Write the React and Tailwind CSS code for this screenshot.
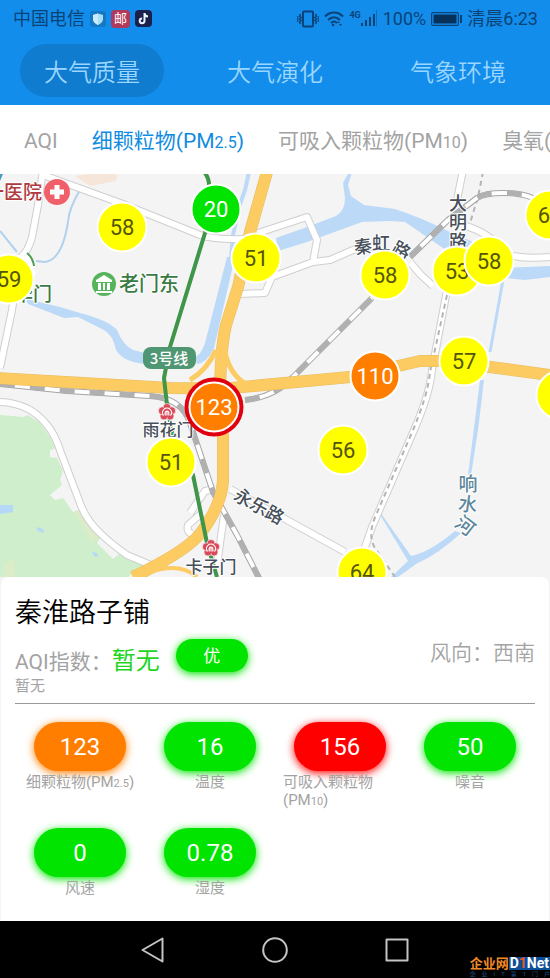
import React, { useState } from "react";

const tabs = ["大气质量", "大气演化", "气象环境"];

const filters = [
  { key: "aqi", name: "AQI" },
  { key: "pm25", name: "细颗粒物", pm: "2.5" },
  { key: "pm10", name: "可吸入颗粒物", pm: "10" },
  { key: "o3", name: "臭氧(O3)" },
];

const levelColor = {
  good: "bg-[#00e400] text-white",
  fair: "bg-[#ffff00] text-[#55550a]",
  light: "bg-[#ff7e00] text-white",
};

// x / y are map units, the map is 550 x 403
const stations = [
  { x: 122, y: 53, value: 58, level: "fair" },
  { x: 216, y: 35, value: 20, level: "good" },
  { x: 256, y: 84, value: 51, level: "fair" },
  { x: 9, y: 105, value: 59, level: "fair" },
  { x: 385, y: 101, value: 58, level: "fair" },
  { x: 457, y: 97, value: 53, level: "fair" },
  { x: 489, y: 87, value: 58, level: "fair" },
  { x: 550, y: 41, value: 62, level: "fair" },
  { x: 464, y: 187, value: 57, level: "fair" },
  { x: 375, y: 202, value: 110, level: "light" },
  { x: 214, y: 233, value: 123, level: "light", active: true },
  { x: 171, y: 288, value: 51, level: "fair" },
  { x: 343, y: 276, value: 56, level: "fair" },
  { x: 362, y: 398, value: 64, level: "fair" },
  { x: 561, y: 221, value: 55, level: "fair" },
];

const pillColor = {
  good: "bg-[#00e400] shadow-[0_2px_8px_#00e400]",
  light: "bg-[#ff7e00] shadow-[0_2px_8px_#ff7e00]",
  bad: "bg-[#ff0000] shadow-[0_2px_8px_#ff0000]",
};

const readings = [
  { value: "123", name: "细颗粒物", pm: "2.5", level: "light" },
  { value: "16", name: "温度", level: "good" },
  { value: "156", name: "可吸入颗粒物", pm: "10", level: "bad" },
  { value: "50", name: "噪音", level: "good" },
  { value: "0", name: "风速", level: "good" },
  { value: "0.78", name: "湿度", level: "good" },
];

const StatusBar = () => (
  <div className="flex items-center justify-between pl-[13px] pr-3 pt-px h-9 text-lg leading-6 text-[#0b4377]">
    <div className="flex items-center gap-[5px]">
      <span>中国电信</span>
      <svg width="16" height="16" viewBox="0 0 16 16">
        <rect width="16" height="16" rx="3" fill="#1478c2" />
        <path d="M8 2.5 13 4v4c0 3-2.500 4.700-5 6-2.500-1.300-5-3-5-6V4z" fill="#a9dcf7" />
        <path d="M8 2.500V14c-2.500-1.300-5-3-5-6V4z" fill="#c9ecfc" />
      </svg>
      <span className="flex items-center justify-center w-[19px] h-[18px] rounded-sm bg-[#b03a5b] text-white text-[13px] leading-4">
        邮
      </span>
      <svg width="17" height="17" viewBox="0 0 17 17">
        <rect width="17" height="17" rx="4" fill="#1b1f4b" />
        <path d="M9.500 3v7.800a2.400 2.400 0 1 1-2.400-2.400M9.500 3.500c.3 1.900 1.600 2.900 3.500 3" fill="none" stroke="#e8f4ff" strokeWidth="2" />
      </svg>
    </div>
    <div className="flex items-center gap-[5px]">
      <svg width="22" height="18" viewBox="0 0 22 18" fill="none" stroke="#0b4377" strokeWidth="1.600">
        <rect x="6" y="1.500" width="10" height="15" rx="1" strokeWidth="2" />
        <path d="M3.500 4 2.500 6 4 7.500 2.500 9 4 10.500 2.500 12l1 2M18.500 4l1 2L18 7.500 19.500 9 18 10.500l1.500 1.500-1 2" />
        <path d="M.7 6v6M21.300 6v6" strokeWidth="1" />
      </svg>
      <svg width="20" height="17" viewBox="0 0 20 17" fill="none" stroke="#0b4377" strokeWidth="2">
        <path d="M1 6.500C6 1 14 1 19 6.500M4 10c3.500-3.800 8.500-3.800 12 0M7 13c2-2 4-2 6 0" />
        <circle cx="9" cy="15" r="1.300" fill="#0b4377" stroke="none" />
        <path d="m13 13 1.500-2 1.500 2zM15 14l1.500 2 1.500-2z" fill="#0b4377" stroke="none" />
      </svg>
      <span className="flex">
        <span className="text-[9px] leading-[10px] font-bold">4G</span>
        <svg width="17" height="17" viewBox="0 0 17 17" fill="#0b4377">
          <rect x="0" y="13" width="2" height="3" />
          <rect x="4" y="10" width="2" height="6" />
          <rect x="8" y="7" width="2" height="9" />
          <rect x="12" y="4" width="2" height="12" />
          <rect x="15" y="0" width="1" height="16" opacity=".4" />
        </svg>
      </span>
      <span>100%</span>
      <svg width="31" height="14" viewBox="0 0 31 14">
        <rect x=".6" y=".6" width="26.800" height="12.800" rx="1.500" fill="none" stroke="#0b4377" strokeWidth="1.200" />
        <rect x="2.500" y="2.500" width="23" height="9" fill="#08315a" />
        <rect x="29" y="3" width="2" height="8" fill="#0b4377" />
      </svg>
      <span>清晨6:23</span>
    </div>
  </div>
);

const MetroIcon = ({ x, y }) => (
  <g transform={`translate(${x} ${y})`}>
    <g fill="#d94a5a" stroke="#fff" strokeWidth=".6">
      <circle cx="0" cy="-4.500" r="4" />
      <circle cx="4.600" cy="-1.200" r="4" />
      <circle cx="3" cy="4" r="4" />
      <circle cx="-3" cy="4" r="4" />
      <circle cx="-4.600" cy="-1.200" r="4" />
    </g>
    <circle r="5.500" fill="#d94a5a" />
    <path d="M-3.500 3.500A4.500 4.500 0 1 1 3.500 3.500M-1.800 3.500V.5a1.800 1.800 0 0 1 1.800-1.500 1.800 1.800 0 0 1 1.800 1.500v3M0-1v4.500" fill="none" stroke="#fff" strokeWidth="1.200" />
  </g>
);

const roads = [
  "M43 170 38 205 32 237Q28 252 20 258L12 310 0 368",
  "M43 175 123 204 200 235Q215 240 245 239",
  "M258 233 307 217 317 240 313 262",
  "M240 294 265 293 272 277 313 262 330 260 353 250 375 246",
  "M410 262 420 274 433 286",
  "M463 170 457 200 M462 225Q490 232 500 250",
  "M513 256Q530 259 550 257",
  "M448 285 432 370Q430 395 411 437L372 527 364 550",
  "M0 402Q30 403 47 425 55 434 61 453L80 503Q86 520 100 533 110 543 127 555L153 566",
  "M230 489 287 520 345 552",
  "M215 489 205 491 190 513 M202 513 188 525Q186 533 193 534",
  "M224 515 217 565",
];

const rails = [
  "M410 257 448 220 477 198Q485 193 503 193 520 193 533 198",
  "M245 400Q275 397 293 377L372 298",
  "M0 384 67 391 150 396Q182 398 190 423L213 492 237 535 260 580",
];

const MapCanvas = () => (
  <svg
    className="block w-full h-full"
    viewBox="0 174 550 403"
    preserveAspectRatio="xMidYMid slice"
    fill="none"
    strokeLinejoin="round"
  >
    <rect x="0" y="174" width="550" height="403" fill="#f4f4f4" />
    {/* park */}
    <path
      fill="#cfeecb"
      d="M0 415 23 417 28 415 40 423 50 437 56 448 50 450 50 457 57 458 63 471 60 480 62 485 50 495 55 500 63 498 73 512 78 511 100 538 97 543 113 559 122 552 145 564 128 577H0z"
    />
    <path d="M74 512 80 509 101 534 92 543z" fill="#dcebc8" />
    <path d="M0 505H13V512L0 514zM36 527l7 2 1 4-6-2zM92 552l5 1 1 4-4-1z" fill="#b5d8f8" />
    <path d="M4 565 14 558 15 577H4z" fill="#dcebc8" />
    <path d="M75 176 100 172 118 175 116 181 90 186z" fill="#f6e6da" />
    <path d="M0 174H3L0 181z" fill="#4a9cc5" />

    {/* water */}
    <g fill="#bcdaf8">
      <path d="M26 299 60 307 80 313Q108 320 117 330 123 345 133 350L145 353V364Q123 362 116 350 113 335 104 330L78 317 64 318 28 304z" />
      <path d="M227 257H235L214 348Q207 363 197 364L195 357Q201 355 205 343z" />
      <path d="M276 238 307 227 336 216Q345 211 345 198L343 183 349 172H352L348 185 351 196 364 205 395 209Q420 217 450 232L480 245V261L443 248 405 222 390 221 362 222 307 242 278 251z" />
      <path d="M500 268 550 266V277L525 280 505 278z" />
      <path d="M480 380H484L478 430 471 475H468L475 420z" />
      <path d="M380 512 411 556Q430 552 455 531L461 533Q440 553 416 564L398 577H391L408 561 379 513z" />
    </g>
    <g stroke="#bcdaf8">
      <path d="M249 172 245 190 240 204 233 235 231 258" strokeWidth="4" />
      <path d="M80 190Q69 208 68 222 62 260 45 262L36 261M0 231 17 252" strokeWidth="2" stroke="#b0d2ee" />
      <path d="M503 280 490 352" strokeWidth="3" />
    </g>

    {/* streets */}
    {roads.map((d) => (
      <path key={d} d={d} stroke="#cfcfcf" strokeWidth="8" />
    ))}
    {roads.map((d) => (
      <path key={d} d={d} stroke="#fff" strokeWidth="6" />
    ))}
    <path d="M22 256Q28 254 32 275" stroke="#fff" strokeWidth="8" />
    <path d="M27 253Q33 258 34 266" stroke="#4c9c55" strokeWidth="2" />
    <path
      d="M483 172 478 197 470 223M447 295 430 372Q428 396 410 437L376 515Q367 535 375 548L395 577"
      stroke="#b4b4b4"
      strokeWidth="2"
      strokeDasharray="5 4"
    />

    {/* railways */}
    {rails.map((d) => (
      <g key={d}>
        <path d={d} stroke="#a5a5a5" strokeWidth="6" />
        <path d={d} stroke="#fff" strokeWidth="4" />
        <path d={d} stroke="#b0b0b0" strokeWidth="5" strokeDasharray="15 15" />
      </g>
    ))}

    {/* expressways */}
    <g stroke="#e6bd64">
      <path d="M-5 378 100 384 170 388Q195 388 220 389L350 377 420 361H445L550 375" strokeWidth="12" />
      <path d="M267 172 250 232 238 287 226 325Q220 350 220 400L223 437V480Q222 505 200 534 185 552 133 577" strokeWidth="12" />
    </g>
    <g stroke="#fccb62">
      <path d="M216 350Q207 370 190 380M225 352Q230 375 246 384" strokeWidth="5" />
      <path d="M-5 378 100 384 170 388Q195 388 220 389L350 377 420 361H445L550 375" strokeWidth="11" />
      <path d="M267 172 250 232 238 287 226 325Q220 350 220 400L223 437V480Q222 505 200 534 185 552 133 577" strokeWidth="11" />
      <path d="M150 572Q180 562 197 577" strokeWidth="4" />
    </g>

    {/* metro line 3 */}
    <path
      d="M204 172Q210 178 209 190L205 233 170 347 164 378 167 405 172 432 193 475 207 543 217 577"
      stroke="#3f9548"
      strokeWidth="4"
    />
    <rect x="143" y="347" width="53" height="22" rx="8" fill="#4f9673" />
    <MetroIcon x={167} y={412} />
    <MetroIcon x={211} y={548} />

    {/* places */}
    <circle cx="57" cy="192" r="13" fill="#f0606b" />
    <path d="M57 185V199M50 192H64" stroke="#fff" strokeWidth="5" />
    <circle cx="104" cy="284" r="12" fill="#56b45c" />
    <path d="M104 275 112 280V282H96V280zM98 283H101V290H98zM103 283H105V290H103zM107 283H110V290H107zM96 291H112V293H96z" fill="#fff" />

    <g
      className="font-['Noto_Sans_CJK_SC',sans-serif] font-medium"
      stroke="#fff"
      strokeWidth="2"
      paintOrder="stroke"
      fontSize="18"
    >
      <g fill="#b03b3f" fontSize="19">
        <text x="42" y="199" textAnchor="end">第一医院</text>
      </g>
      <g fill="#3a7a45" fontSize="19">
        <text x="52" y="301" textAnchor="end">中华门</text>
        <text x="119" y="291" fontSize="20">老门东</text>
      </g>
      <text x="169" y="364" fill="#fff" stroke="none" fontSize="15" textAnchor="middle">3号线</text>
      <g fill="#474f5a" textAnchor="middle">
        <text x="168" y="436" fontSize="17">雨花门</text>
        <text x="211" y="573" fontSize="17">卡子门</text>
        <text transform="translate(364 253) rotate(-8)">秦</text>
        <text transform="translate(381 250)">虹</text>
        <text transform="translate(398 256) rotate(30)">路</text>
        <text x="458" y="210">大</text>
        <text x="458" y="229">明</text>
        <text x="458" y="248">路</text>
        <text transform="translate(256 512) rotate(29)">永乐路</text>
      </g>
      <g fill="#5d879c" textAnchor="middle" fontSize="19">
        <text x="468" y="491">响</text>
        <text transform="translate(467 511) rotate(8)">水</text>
        <text transform="translate(461 531) rotate(38)">河</text>
      </g>
    </g>
  </svg>
);

const Station = ({ station, onSelect }) => (
  <button
    type="button"
    onClick={onSelect}
    style={{ left: `${(station.x / 550) * 100}%`, top: `${(station.y / 403) * 100}%` }}
    className={`absolute -translate-x-1/2 -translate-y-1/2 flex items-center justify-center rounded-full border-2 border-white w-[51px] h-[51px] pt-px text-[22px] leading-6 ${
      levelColor[station.level]
    } ${station.active ? "ring-4 ring-[#e00010]" : ""}`}
  >
    {station.value}
  </button>
);

const App = () => {
  const [tab, setTab] = useState(0);
  const [filter, setFilter] = useState("pm25");
  const [selected, setSelected] = useState(10);

  return (
    <div className="flex flex-col min-h-screen overflow-hidden bg-[#f4f4f4] font-[Roboto,'Noto_Sans_CJK_SC',sans-serif]">
      <header className="bg-[#128deb]">
        <StatusBar />
        <nav className="flex justify-between px-5 pt-2 pb-2">
          {tabs.map((name, index) => (
            <button
              key={name}
              type="button"
              onClick={() => setTab(index)}
              className={`h-[53px] px-6 pt-1 rounded-full text-2xl font-[350] text-[#9ad6ff] ${
                tab === index ? "bg-[#107ccf]" : ""
              }`}
            >
              {name}
            </button>
          ))}
        </nav>
      </header>

      <div className="flex items-center gap-[34px] h-[69px] pl-6 pt-1 overflow-hidden bg-white text-[21px] whitespace-nowrap">
        {filters.map((item) => (
          <button
            key={item.key}
            type="button"
            onClick={() => setFilter(item.key)}
            className={`shrink-0 ${filter === item.key ? "text-[#128ce0]" : "text-[#a3a3a3]"}`}
          >
            {item.name}
            {item.pm && (
              <>
                (PM<span className="text-base">{item.pm}</span>)
              </>
            )}
          </button>
        ))}
      </div>

      <main className="flex flex-col flex-1">
        <div className="relative flex-1 min-h-[400px] overflow-hidden">
          <div className="absolute inset-0">
            <MapCanvas />
          </div>
          {stations.map((station, index) => (
            <Station
              key={index}
              station={{ ...station, active: selected === index }}
              onSelect={() => setSelected(index)}
            />
          ))}
        </div>

        <section className="mx-px px-[14px] pt-[18px] pb-6 rounded-t-lg bg-white text-[#a3a3a3]">
          <h2 className="text-[27px] leading-9 font-[350] text-black">秦淮路子铺</h2>
          <div className="flex items-start justify-between mt-2 text-[21px] leading-7">
            <div className="flex items-start">
              <p className="pt-2">
                AQI指数：<span className="text-2xl leading-7 text-[#1fd51f]">暂无</span>
              </p>
              <span className="flex items-center justify-center w-[72px] h-[33px] ml-4 rounded-full bg-[#00e400] text-white text-[17px] shadow-[0_2px_8px_#00e400]">
                优
              </span>
            </div>
            <p className="font-[350]">风向：西南</p>
          </div>
          <p className="pb-[7px] text-[15px] leading-5 border-b border-[#999999]">暂无</p>

          <div className="grid grid-cols-4 gap-y-[17px] pt-[18px]">
            {readings.map((item) => (
              <div key={item.name} className="flex flex-col items-center px-2">
                <div
                  className={`flex items-center justify-center w-[92px] h-[49px] rounded-full text-white text-2xl ${
                    pillColor[item.level]
                  }`}
                >
                  {item.value}
                </div>
                <p className="mt-[2px] text-[15px] leading-[18px]">
                  {item.name}
                  {item.pm && (
                    <>
                      <wbr />
                      (PM<span className="text-[11px]">{item.pm}</span>)
                    </>
                  )}
                </p>
              </div>
            ))}
          </div>
        </section>
      </main>

      <footer className="relative flex items-center justify-center h-[57px] bg-black">
        <button type="button" aria-label="返回" className="flex justify-center w-[122px]">
          <svg width="26" height="28" viewBox="0 0 26 28" fill="none" stroke="#c4c4c4" strokeWidth="2" strokeLinejoin="round">
            <path d="M22.500 2.500V25.500L2.500 14z" />
          </svg>
        </button>
        <button type="button" aria-label="主页" className="flex justify-center w-[122px]">
          <svg width="28" height="28" viewBox="0 0 28 28" fill="none" stroke="#c4c4c4" strokeWidth="2">
            <circle cx="14" cy="14" r="11.800" />
          </svg>
        </button>
        <button type="button" aria-label="最近任务" className="flex justify-center w-[122px]">
          <svg width="28" height="28" viewBox="0 0 28 28" fill="none" stroke="#c4c4c4" strokeWidth="2" strokeLinejoin="round">
            <rect x="3.500" y="3.500" width="21" height="21" />
          </svg>
        </button>
        <div className="absolute right-0 bottom-0">
          <p className="flex items-center text-[13px] leading-[13px] font-bold">
            <span className="text-[#f08a24]">企业网</span>
            <span className="px-px bg-[#0d4f96] text-white text-sm leading-[13px]">
              D<span className="text-[#f0562a]">1</span>Net
            </span>
          </p>
          <p className="flex justify-between text-[6px] leading-[8px] text-[#1d4f86]">
            <span>企</span>
            <span>业</span>
            <span>I</span>
            <span>T</span>
            <span>第</span>
            <span>1</span>
            <span>门</span>
            <span>户</span>
          </p>
        </div>
      </footer>
    </div>
  );
};

export default App;
